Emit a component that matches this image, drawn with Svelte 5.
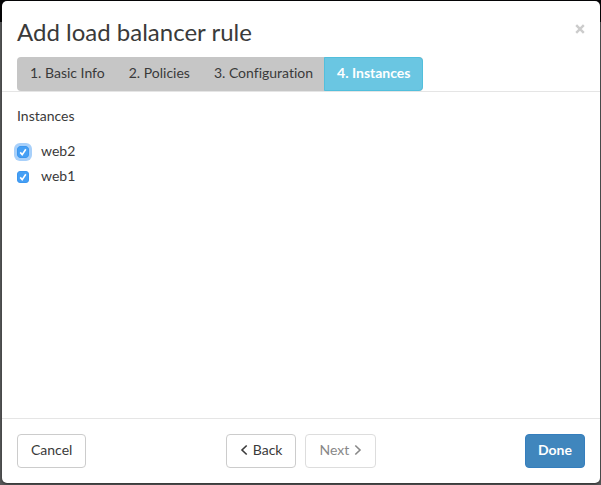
<script>
  const steps = ['1. Basic Info', '2. Policies', '3. Configuration', '4. Instances'];
  let current = $state(3);
  let instances = $state([
    { name: 'web2', checked: true },
    { name: 'web1', checked: true }
  ]);
</script>

<div class="backdrop">
  <div class="modal" role="dialog" aria-labelledby="title">
    <header>
      <div class="heading">
        <h1 id="title">Add load balancer rule</h1>
        <button class="close" type="button" aria-label="Close">
          <svg viewBox="0 0 10 10" width="10" height="10"><path d="M1.2 1.2 8.8 8.8M8.8 1.2 1.2 8.8" /></svg>
        </button>
      </div>
      <nav>
        {#each steps as step, i}
          <button type="button" class="step" class:active={i === current} onclick={() => (current = i)}>{step}</button>
        {/each}
      </nav>
    </header>

    <main>
      <h2>Instances</h2>
      {#each instances as item, i}
        <label>
          <span class="box" class:focused={i === 0}>
            <input type="checkbox" bind:checked={item.checked} />
            <svg viewBox="0 0 12 12" width="12" height="12"><path d="M3.2 6.4 5.2 8.6 8.8 3.2" /></svg>
          </span>
          {item.name}
        </label>
      {/each}
    </main>

    <footer>
      <button type="button" class="btn">Cancel</button>
      <div class="pager">
        <button type="button" class="btn">
          <svg viewBox="0 0 8 12" width="8" height="12"><path d="M6.7 1.5 2 6l4.7 4.5" /></svg>
          Back
        </button>
        <button type="button" class="btn" disabled>
          Next
          <svg viewBox="0 0 8 12" width="8" height="12"><path d="M1.3 1.5 6 6l-4.7 4.5" /></svg>
        </button>
      </div>
      <button type="button" class="btn primary">Done</button>
    </footer>
  </div>
</div>

<style>
  :global(body) {
    margin: 0;
    background: #555;
  }
  .backdrop {
    box-sizing: border-box;
    display: flex;
    min-height: 100vh;
    padding: 1px 1px 2px 2px;
    background: linear-gradient(#050507 22px, #58595a 22px);
    font: 14px/20px Lato, "Open Sans", sans-serif;
    font-variant-ligatures: none;
    color: #3a3a3a;
  }
  .modal {
    flex: 1;
    display: flex;
    flex-direction: column;
    background: #fff;
    border-radius: 5px;
    box-shadow: 0 1px 3px rgba(0, 0, 0, 0.5);
  }
  button {
    font: inherit;
    font-variant-ligatures: none;
    color: inherit;
    cursor: pointer;
  }
  svg {
    fill: none;
    stroke: currentColor;
  }
  header {
    padding: 15px 15px 0;
    border-bottom: 1px solid #e5e5e5;
  }
  .heading {
    display: flex;
    justify-content: space-between;
    align-items: flex-start;
    margin-bottom: 9px;
  }
  h1 {
    margin: 0;
    font-size: 24px;
    line-height: 32px;
    font-weight: 400;
  }
  .close {
    display: flex;
    padding: 8px 0;
    border: 0;
    background: none;
    color: #ccc;
    stroke-width: 2.4;
  }
  nav {
    display: inline-flex;
    vertical-align: top;
    background: #c6c6c6;
    border-radius: 4px;
  }
  .step {
    height: 34px;
    padding: 0 11px 2px 12px;
    border: 1px solid transparent;
    border-right-width: 0;
    background: none;
    white-space: nowrap;
  }
  .step.active {
    border: 1px solid #52bfdc;
    border-radius: 0 4px 4px 0;
    background: #6ac6e2;
    color: #fff;
    font-weight: 700;
  }
  main {
    flex: 1;
    padding: 14px 15px;
  }
  h2 {
    margin: 0 0 15px;
    font-size: 14px;
    line-height: 20px;
    font-weight: 400;
  }
  label {
    display: flex;
    align-items: flex-end;
    width: max-content;
    gap: 12px;
    margin-bottom: 5px;
  }
  .box {
    display: grid;
    width: 12px;
    height: 12px;
    margin-bottom: 3px;
    border-radius: 3px;
    color: #fff;
  }
  .box.focused {
    box-shadow: 0 0 0 3px #a8d0fa;
  }
  .box input,
  .box svg {
    grid-area: 1 / 1;
  }
  .box input {
    appearance: none;
    width: 12px;
    height: 12px;
    margin: 0;
    border: 1px solid #3c97ef;
    border-radius: 3px;
    outline: none;
  }
  .box input:checked {
    background: #459ff5;
  }
  .box svg {
    pointer-events: none;
    stroke-width: 1.6;
    z-index: 1;
  }
  .box input:not(:checked) + svg {
    visibility: hidden;
  }
  footer {
    display: grid;
    grid-template-columns: 1fr auto 1fr;
    align-items: center;
    padding: 15px;
    border-top: 1px solid #e5e5e5;
  }
  footer > .btn {
    justify-self: start;
  }
  .pager {
    display: flex;
    gap: 9px;
  }
  .btn {
    display: flex;
    align-items: center;
    gap: 5px;
    height: 34px;
    padding: 0 13px 2px;
    border: 1px solid #ccc;
    border-radius: 4px;
    background: #fff;
  }
  .btn svg {
    stroke-width: 1.6;
  }
  .btn:disabled {
    border-color: #ddd;
    color: #888;
    cursor: not-allowed;
  }
  footer > .primary {
    justify-self: end;
    padding: 0 12px 2px;
    border-color: #357ebd;
    background: #4086bd;
    color: #fff;
    font-weight: 700;
  }
</style>
